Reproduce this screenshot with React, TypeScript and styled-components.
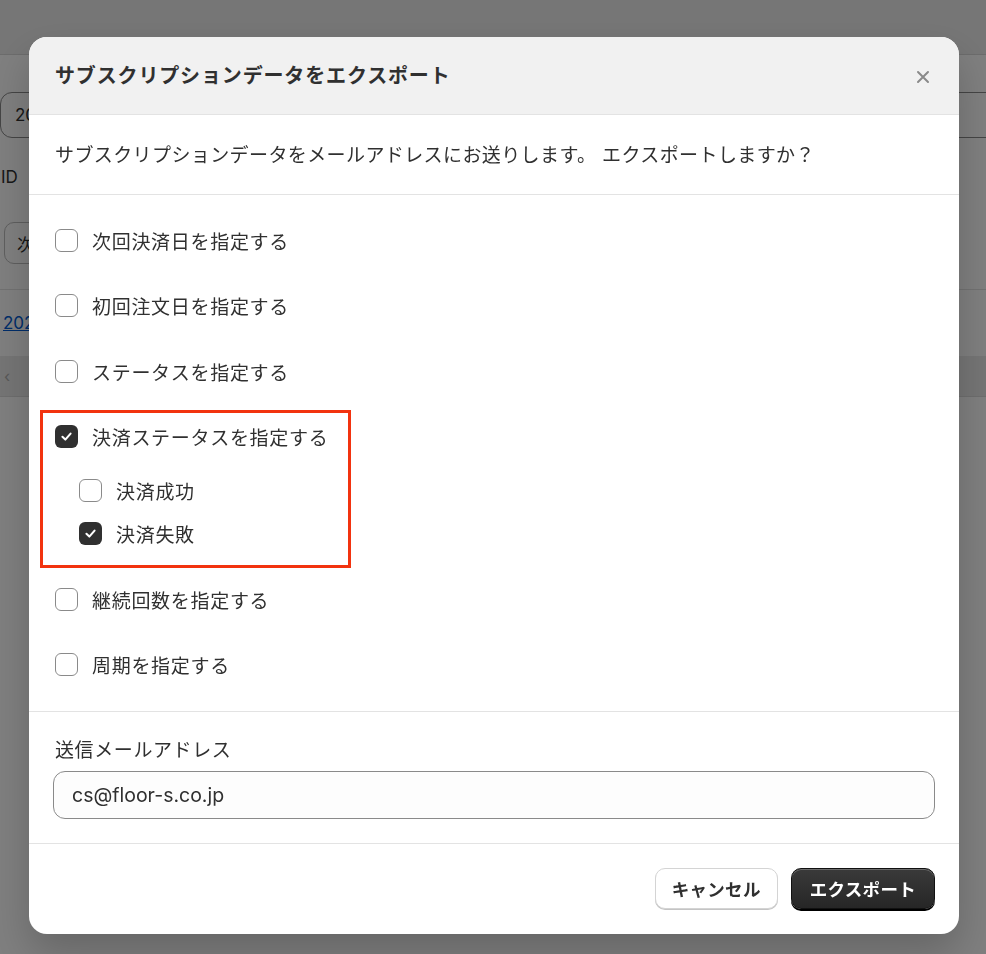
import React from "react";
import styled, { createGlobalStyle } from "styled-components";

const GlobalStyle = createGlobalStyle`
  html, body { margin: 0; padding: 0; background: #ffffff; }
  body {
    font-family: "Inter", "Noto Sans CJK JP", sans-serif;
    color: #303030;
    overflow: hidden;
  }
  * { box-sizing: border-box; }
`;

/* ---------- background page ---------- */
const Page = styled.div`
  width: 986px;
  height: 954px;
  background: #ffffff;
  overflow: hidden;
`;

const TopBar = styled.div`
  height: 55px;
  background: #ececec;
  border-bottom: 1px solid #d8d8d8;
`;

const PageBody = styled.div`
  display: flex;
  flex-direction: column;
  padding-top: 37px;
`;

const BgInput = styled.div`
  height: 46px;
  width: 1010px;
  border: 1px solid #8a8a8a;
  border-radius: 12px;
  display: flex;
  align-items: center;
  padding-left: 14px;
  font-size: 17px;
  color: #303030;
`;

const BgLabel = styled.div`
  margin-top: 28px;
  font-size: 17px;
  line-height: 22px;
  padding-left: 1px;
`;

const BgButton = styled.div`
  margin-top: 34px;
  margin-left: 4px;
  width: 80px;
  height: 42px;
  border: 1px solid #bdbdbd;
  border-radius: 10px;
  display: flex;
  align-items: center;
  padding-left: 12px;
  font-size: 17px;
`;

const BgDivider = styled.div`
  margin-top: 25px;
  height: 1px;
  background: #e3e3e3;
`;

const BgLink = styled.a`
  margin-top: 22px;
  margin-left: 3px;
  font-size: 17px;
  line-height: 22px;
  color: #005bd3;
  text-decoration: underline;
`;

const BgBar = styled.div`
  margin-top: 22px;
  height: 41px;
  background: #ebebeb;
  display: flex;
  align-items: center;
  padding-left: 4px;
  color: #b0b0b0;
  border-bottom: 1px solid #dcdcdc;
`;

/* ---------- overlay & modal ---------- */
const Overlay = styled.div`
  position: fixed;
  inset: 0;
  background: rgba(0, 0, 0, 0.5);
  display: flex;
  justify-content: center;
  align-items: flex-start;
  padding: 37px 0 0 2px;
`;

const Modal = styled.div`
  width: 930px;
  background: #ffffff;
  border-radius: 18px;
  overflow: hidden;
  display: flex;
  flex-direction: column;
  box-shadow: 0 20px 40px rgba(0, 0, 0, 0.2);
`;

const Header = styled.div`
  height: 78px;
  background: #f1f1f1;
  border-bottom: 1px solid #e3e3e3;
  display: flex;
  align-items: center;
  justify-content: space-between;
  padding: 0 22px 0 26px;
`;

const Title = styled.h2`
  margin: 0;
  font-size: 20px;
  font-weight: 700;
  letter-spacing: 0.85px;
  color: #303030;
  line-height: 28px;
`;

const CloseButton = styled.button`
  width: 28px;
  height: 28px;
  border: none;
  background: transparent;
  padding: 0;
  display: flex;
  align-items: center;
  justify-content: center;
  margin-top: 2px;
  cursor: pointer;
`;

const Section = styled.div<{ $pt: number; $pb: number }>`
  padding: ${(p) => p.$pt}px 24px ${(p) => p.$pb}px 24px;
  border-bottom: 1px solid #e3e3e3;
`;

const Description = styled.p`
  margin: 0 0 0 2px;
  font-size: 19px;
  line-height: 26px;
  letter-spacing: 0.4px;
  color: #303030;
`;

const OptionList = styled.div`
  display: flex;
  flex-direction: column;
  gap: 39.5px;
  padding-left: 2px;
`;

const Group = styled.div`
  position: relative;
  display: flex;
  flex-direction: column;
  &::after {
    content: "";
    position: absolute;
    top: -14px;
    left: -15px;
    width: 305px;
    bottom: -21px;
    border: 3px solid #f2330f;
    pointer-events: none;
  }
`;

const SubList = styled.div`
  display: flex;
  flex-direction: column;
  gap: 17px;
  margin-top: 28px;
  padding-left: 24px;
`;

const Row = styled.label`
  display: flex;
  align-items: center;
  gap: 14px;
  height: 26px;
  font-size: 19px;
  letter-spacing: 0.7px;
  color: #303030;
  cursor: pointer;
`;

const Box = styled.span<{ $checked: boolean }>`
  width: 23px;
  height: 23px;
  flex: none;
  border-radius: 6px;
  border: ${(p) => (p.$checked ? "none" : "1px solid #8a8a8a")};
  background: ${(p) => (p.$checked ? "#303030" : "#ffffff")};
  display: flex;
  align-items: center;
  justify-content: center;
`;

const FieldLabel = styled.div`
  margin-left: 2px;
  font-size: 19px;
  line-height: 26px;
  letter-spacing: 0.6px;
  color: #303030;
`;

const TextInput = styled.input`
  display: block;
  margin-top: 7px;
  width: 100%;
  height: 48px;
  border: 1px solid #8a8a8a;
  border-radius: 12px;
  background: #fdfdfd;
  padding: 0 18px;
  font-family: "Inter", "Noto Sans CJK JP", sans-serif;
  font-size: 19.5px;
  color: #303030;
  outline: none;
`;

const Footer = styled.div`
  display: flex;
  justify-content: flex-end;
  gap: 13px;
  padding: 24px 24px 25px 24px;
`;

const Button = styled.button<{ $primary?: boolean }>`
  height: 41px;
  padding: 0 ${(p) => (p.$primary ? 18 : 16)}px;
  border-radius: 10px;
  font-family: "Inter", "Noto Sans CJK JP", sans-serif;
  font-size: 17.5px;
  font-weight: 600;
  letter-spacing: 0.3px;
  cursor: pointer;
  color: ${(p) => (p.$primary ? "#ffffff" : "#303030")};
  background: ${(p) =>
    p.$primary ? "linear-gradient(#3a3a3a, #262626)" : "#ffffff"};
  border: ${(p) => (p.$primary ? "1px solid #111111" : "1px solid #d4d4d4")};
  box-shadow: ${(p) =>
    p.$primary
      ? "inset 0 1px 0 rgba(255,255,255,0.25), 0 2px 0 #000000"
      : "0 1px 0 #c4c4c4"};
`;

const Check = () => (
  <svg width="15" height="15" viewBox="0 0 14 14" fill="none">
    <path
      d="M3.2 7.3 L5.9 9.9 L10.8 4.3"
      stroke="#ffffff"
      strokeWidth="1.9"
      strokeLinecap="round"
      strokeLinejoin="round"
    />
  </svg>
);

const Option: React.FC<{ label: string; checked?: boolean }> = ({
  label,
  checked = false,
}) => (
  <Row>
    <Box $checked={checked}>{checked && <Check />}</Box>
    <span>{label}</span>
  </Row>
);

export default function App() {
  return (
    <>
      <GlobalStyle />
      <Page>
        <TopBar />
        <PageBody>
          <BgInput>2025</BgInput>
          <BgLabel>ID</BgLabel>
          <BgButton>次回</BgButton>
          <BgDivider />
          <BgLink>2025</BgLink>
          <BgBar>‹</BgBar>
        </PageBody>
      </Page>
      <Overlay>
        <Modal role="dialog">
          <Header>
            <Title>サブスクリプションデータをエクスポート</Title>
            <CloseButton aria-label="閉じる">
              <svg width="14" height="14" viewBox="0 0 14 14">
                <path
                  d="M2 2 L12 12 M12 2 L2 12"
                  stroke="#8a8a8a"
                  strokeWidth="2"
                  strokeLinecap="round"
                />
              </svg>
            </CloseButton>
          </Header>
          <Section $pt={28} $pb={25}>
            <Description>
              サブスクリプションデータをメールアドレスにお送りします。
              エクスポートしますか？
            </Description>
          </Section>
          <Section $pt={32} $pb={33}>
            <OptionList>
              <Option label="次回決済日を指定する" />
              <Option label="初回注文日を指定する" />
              <Option label="ステータスを指定する" />
              <Group>
                <Option label="決済ステータスを指定する" checked />
                <SubList>
                  <Option label="決済成功" />
                  <Option label="決済失敗" checked />
                </SubList>
              </Group>
              <Option label="継続回数を指定する" />
              <Option label="周期を指定する" />
            </OptionList>
          </Section>
          <Section $pt={26} $pb={24}>
            <FieldLabel>送信メールアドレス</FieldLabel>
            <TextInput defaultValue="cs@floor-s.co.jp" />
          </Section>
          <Footer>
            <Button>キャンセル</Button>
            <Button $primary>エクスポート</Button>
          </Footer>
        </Modal>
      </Overlay>
    </>
  );
}
